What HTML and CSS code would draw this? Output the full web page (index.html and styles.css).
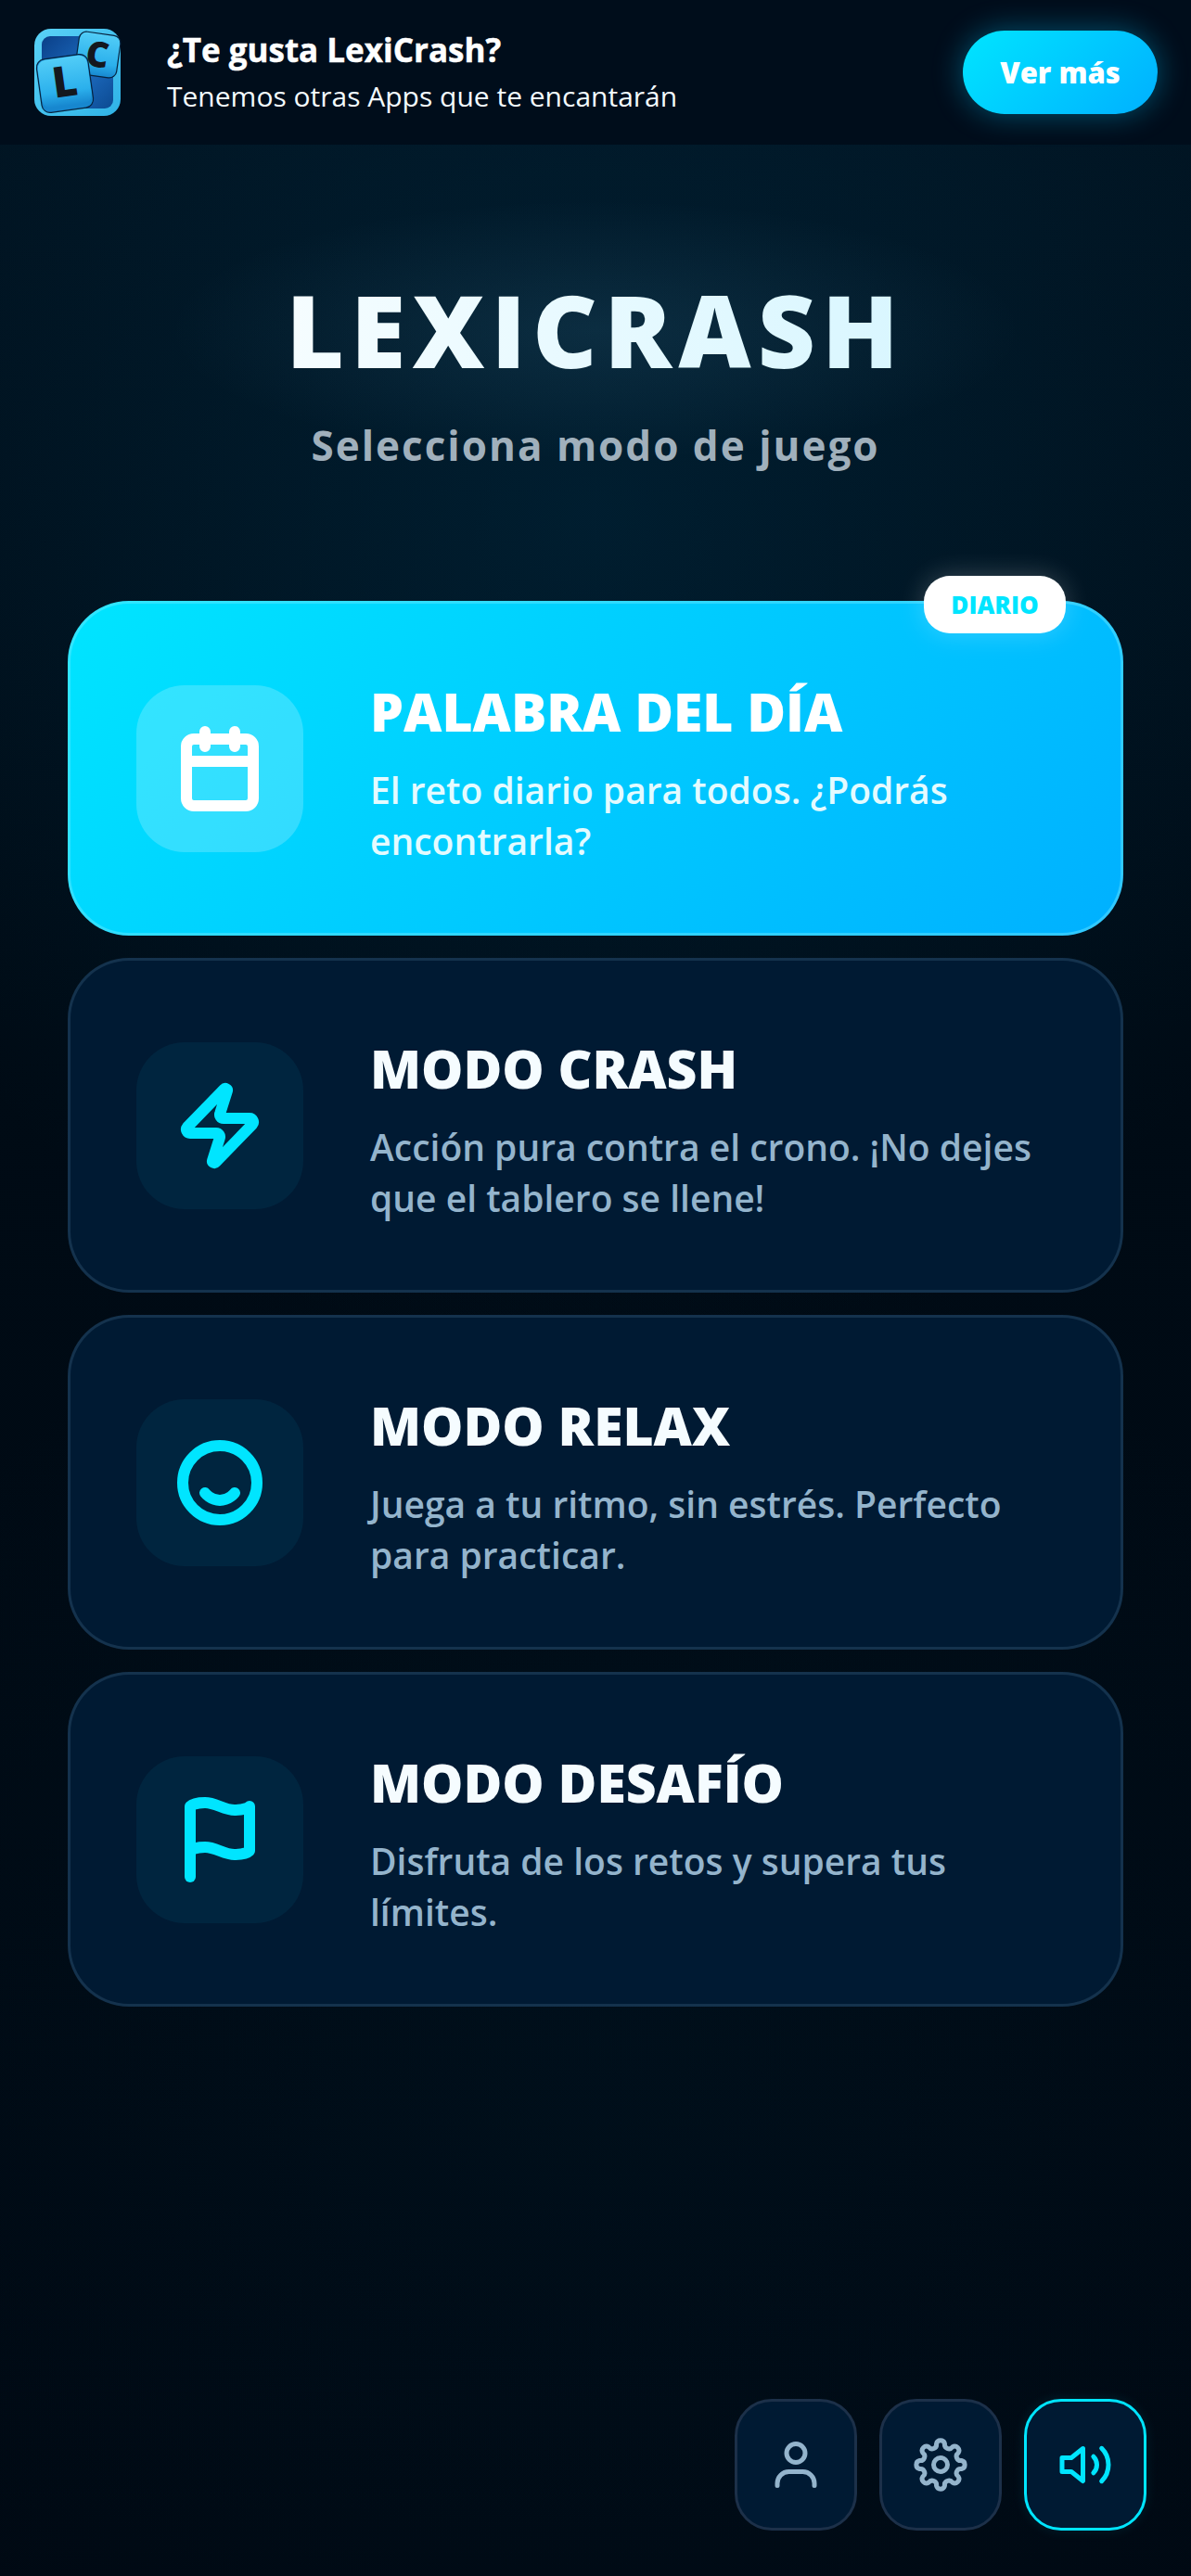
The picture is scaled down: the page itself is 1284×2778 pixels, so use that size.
FILE: index.html
```html
<!DOCTYPE html>
<html lang="es">
<head>
<meta charset="utf-8">
<title>LexiCrash</title>
<link rel="stylesheet" href="styles.css">
</head>
<body>
<div class="app">
  <header class="promo">
    <svg class="logo" viewBox="0 0 94 94" aria-hidden="true">
      <defs>
        <linearGradient id="lgFrame" x1="0" y1="0" x2="1" y2="1"><stop offset="0" stop-color="#5ad2f7"/><stop offset="1" stop-color="#2fb2e6"/></linearGradient>
        <linearGradient id="lgInner" x1="0" y1="0" x2="1" y2="1"><stop offset="0" stop-color="#0a3f88"/><stop offset=".55" stop-color="#1d6cc0"/><stop offset="1" stop-color="#0c4a92"/></linearGradient>
        <linearGradient id="lgTile" x1="0" y1="0" x2="0" y2="1"><stop offset="0" stop-color="#52cdf7"/><stop offset=".7" stop-color="#2bb0ec"/><stop offset="1" stop-color="#1787cf"/></linearGradient>
      </defs>
      <rect x="0" y="0" width="93" height="94" rx="18" fill="url(#lgFrame)"/>
      <rect x="8" y="8" width="77" height="78" rx="9" fill="url(#lgInner)"/>
      <g transform="rotate(8 68 28)">
        <rect x="46" y="5" width="45" height="46" rx="8" fill="url(#lgTile)" stroke="#06233f" stroke-width="1.2"/>
        <text class="logo-c" x="68" y="41">C</text>
      </g>
      <g transform="rotate(-8 33 59)">
        <rect x="5" y="30" width="56" height="58" rx="9" fill="#1787cf" stroke="#06233f" stroke-width="1.2"/>
        <rect x="6" y="31" width="54" height="52" rx="9" fill="url(#lgTile)"/>
        <text class="logo-l" x="33" y="73">L</text>
      </g>
    </svg>
    <div class="promo-text">
      <div class="promo-title">¿Te gusta LexiCrash?</div>
      <div class="promo-sub">Tenemos otras Apps que te encantarán</div>
    </div>
    <button class="promo-btn">Ver más</button>
  </header>

  <main class="main">
    <div class="hero">
      <h1 class="brand">LEXICRASH</h1>
      <p class="tagline">Selecciona modo de juego</p>
    </div>

    <div class="modes">
      <article class="card card-daily">
        <span class="badge">DIARIO</span>
        <div class="card-icon">
          <svg class="icon-lg" viewBox="0 0 24 24"><rect x="3" y="4" width="18" height="18" rx="2"/><path d="M8 2v4M16 2v4M3 10h18"/></svg>
        </div>
        <div class="card-body">
          <h2 class="card-title">PALABRA DEL DÍA</h2>
          <p class="card-desc">El reto diario para todos. ¿Podrás encontrarla?</p>
        </div>
      </article>

      <article class="card">
        <div class="card-icon">
          <svg class="icon-lg" viewBox="0 0 24 24"><path d="M4 14a1 1 0 0 1-.78-1.63l9.9-10.2a.5.5 0 0 1 .86.46l-1.92 6.02A1 1 0 0 0 13 10h7a1 1 0 0 1 .78 1.63l-9.9 10.2a.5.5 0 0 1-.86-.46l1.92-6.02A1 1 0 0 0 11 14z"/></svg>
        </div>
        <div class="card-body">
          <h2 class="card-title">MODO CRASH</h2>
          <p class="card-desc">Acción pura contra el crono. ¡No dejes que el tablero se llene!</p>
        </div>
      </article>

      <article class="card">
        <div class="card-icon">
          <svg class="icon-lg" viewBox="0 0 24 24"><circle cx="12" cy="12" r="10"/><path d="M8 14.75s1.5 2 4 2 4-2 4-2"/></svg>
        </div>
        <div class="card-body">
          <h2 class="card-title">MODO RELAX</h2>
          <p class="card-desc">Juega a tu ritmo, sin estrés. Perfecto para practicar.</p>
        </div>
      </article>

      <article class="card">
        <div class="card-icon">
          <svg class="icon-lg" viewBox="0 0 24 24"><path d="M4 15s1-1 4-1 5 2 8 2 4-1 4-1V3s-1 1-4 1-5-2-8-2-4 1-4 1z"/><path d="M4 22v-7"/></svg>
        </div>
        <div class="card-body">
          <h2 class="card-title">MODO DESAFÍO</h2>
          <p class="card-desc">Disfruta de los retos y supera tus límites.</p>
        </div>
      </article>
    </div>
  </main>

  <footer class="toolbar">
    <button class="tool">
      <svg class="icon-sm" viewBox="0 0 24 24"><circle cx="12" cy="7" r="4"/><path d="M4 21v-1a5 5 0 0 1 5-5h6a5 5 0 0 1 5 5v1"/></svg>
    </button>
    <button class="tool">
      <svg class="icon-gear" viewBox="-32 -32 64 64"><path d="M22.56 -4.49A4.6 4.6 0 0 1 22.56 4.49A4.6 4.6 0 0 0 19.12 12.78A4.6 4.6 0 0 1 12.78 19.12A4.6 4.6 0 0 0 4.49 22.56A4.6 4.6 0 0 1 -4.49 22.56A4.6 4.6 0 0 0 -12.78 19.12A4.6 4.6 0 0 1 -19.12 12.78A4.6 4.6 0 0 0 -22.56 4.49A4.6 4.6 0 0 1 -22.56 -4.49A4.6 4.6 0 0 0 -19.12 -12.78A4.6 4.6 0 0 1 -12.78 -19.12A4.6 4.6 0 0 0 -4.49 -22.56A4.6 4.6 0 0 1 4.49 -22.56A4.6 4.6 0 0 0 12.78 -19.12A4.6 4.6 0 0 1 19.12 -12.78A4.6 4.6 0 0 0 22.56 -4.49Z"/><circle cx="0" cy="0" r="7.5"/></svg>
    </button>
    <button class="tool tool-on">
      <svg class="icon-sm" viewBox="0 0 24 24"><path d="M11 5 6 9H2v6h4l5 4z"/><path d="M15.54 8.46a5 5 0 0 1 0 7.07"/><path d="M19.07 4.93a10 10 0 0 1 0 14.14"/></svg>
    </button>
  </footer>
</div>
</body>
</html>
```

FILE: styles.css
```css
* { box-sizing: border-box; margin: 0; padding: 0; }

html, body { height: 100%; }

body {
  background: #000a14;
  font-family: "Open Sans", "Noto Sans", sans-serif;
  color: #fff;
}

.app {
  width: 1284px;
  height: 2778px;
  display: flex;
  flex-direction: column;
  overflow: hidden;
  background:
    radial-gradient(ellipse 900px 900px at 640px 560px, rgba(0, 60, 90, .32), rgba(0, 40, 60, 0) 100%),
    radial-gradient(ellipse 900px 900px at 640px 2200px, rgba(0, 40, 60, .18), rgba(0, 40, 60, 0) 100%),
    linear-gradient(180deg, #011422 0%, #000b15 40%, #000913 100%);
}

/* promo banner */
.promo {
  height: 156px;
  flex: none;
  display: flex;
  align-items: center;
  padding: 0 36px 0 37px;
  background: #000d1b;
}

.logo { width: 94px; height: 94px; flex: none; }

.logo-l, .logo-c {
  font-family: "Open Sans", sans-serif;
  font-weight: 800;
  fill: #14181e;
  text-anchor: middle;
}

.logo-l { font-size: 46px; }
.logo-c { font-size: 38px; }

.promo-text { flex: 1; margin-left: 49px; }

.promo-title {
  font-size: 35px;
  line-height: 44px;
  font-weight: 700;
  -webkit-text-stroke: .5px #fff;
}

.promo-sub {
  font-size: 30px;
  line-height: 40px;
  margin-top: 8px;
  font-weight: 400;
  color: #f4fbff;
}

.promo-btn {
  width: 210px;
  height: 90px;
  border: 0;
  border-radius: 45px;
  background: linear-gradient(135deg, #00e5ff, #00b0ff);
  box-shadow: 0 0 32px rgba(0, 200, 255, .38);
  color: #fff;
  font-family: inherit;
  font-size: 31px;
  font-weight: 800;
}

/* hero */
.main { flex: 1; padding: 0 73px; }

.hero {
  text-align: center;
  background: radial-gradient(ellipse 460px 140px at 50% 200px, rgba(90, 170, 210, .12), rgba(90, 170, 210, 0) 100%);
  padding-top: 153px;
}

.brand {
  font-size: 108px;
  line-height: 94px;
  font-weight: 800;
  letter-spacing: 7px;
  background: linear-gradient(90deg, #fff 0%, #cff4ff 100%);
  -webkit-background-clip: text;
  background-clip: text;
  color: transparent;
}

.tagline {
  margin-top: 47px;
  font-size: 44px;
  line-height: 60px;
  font-weight: 700;
  letter-spacing: 2px;
  color: #a0b0bc;
}

/* mode cards */
.modes {
  margin-top: 138px;
  display: flex;
  flex-direction: column;
  gap: 24px;
}

.card {
  position: relative;
  height: 361px;
  display: flex;
  align-items: center;
  gap: 72px;
  padding: 0 71px;
  border: 3px solid rgba(120, 170, 210, .17);
  border-radius: 66px;
  background: #001a33;
}

.card-daily {
  border-color: rgba(120, 235, 255, .4);
  background: linear-gradient(135deg, #00e5ff 0%, #00b0ff 100%);
  background-origin: border-box;
}

.badge {
  position: absolute;
  top: -30px;
  right: 59px;
  width: 153px;
  height: 62px;
  display: flex;
  align-items: center;
  justify-content: center;
  border-radius: 28px;
  background: #fff;
  box-shadow: 0 0 28px rgba(255, 255, 255, .22);
  color: #00e5ff;
  font-size: 26px;
  font-weight: 800;
}

.card-icon {
  width: 180px;
  height: 180px;
  flex: none;
  display: flex;
  align-items: center;
  justify-content: center;
  border-radius: 52px;
  background: rgba(0, 229, 255, .06);
}

.card-daily .card-icon { background: rgba(255, 255, 255, .2); }

.icon-lg {
  width: 96px;
  height: 96px;
  fill: none;
  stroke: #00e5ff;
  stroke-width: 3;
  stroke-linecap: round;
  stroke-linejoin: round;
}

.card-daily .icon-lg { stroke: #fff; }

.card-body { flex: 1; min-width: 0; padding-top: 12px; }

.card-title {
  font-size: 57px;
  line-height: 64px;
  font-weight: 800;
  color: #f5fcff;
}

.card-daily .card-title { color: #fff; }

.card-desc {
  margin-top: 25px;
  font-size: 39px;
  line-height: 55px;
  font-weight: 600;
  color: #94b4cc;
}

.card-daily .card-desc { color: #e4fbff; }

/* bottom toolbar */
.toolbar {
  flex: none;
  display: flex;
  justify-content: flex-end;
  gap: 24px;
  padding: 0 48px 49px 0;
}

.tool {
  width: 132px;
  height: 142px;
  display: flex;
  align-items: center;
  justify-content: center;
  border: 3px solid #1c3049;
  border-radius: 40px;
  background: #001a33;
}

.tool-on { border-color: #00e5ff; box-shadow: 0 0 14px rgba(0, 229, 255, .1); }

.icon-sm, .icon-gear {
  fill: none;
  stroke: #94b4cc;
  stroke-width: 2;
  stroke-linecap: round;
  stroke-linejoin: round;
  width: 60px;
  height: 60px;
}

.icon-gear { width: 64px; height: 64px; stroke-width: 5; }

.tool-on .icon-sm { stroke: #00e5ff; }
```
